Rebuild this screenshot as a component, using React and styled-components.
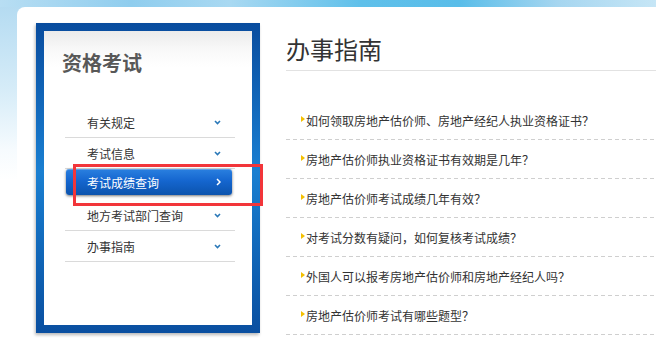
import React from 'react';
import styled, { createGlobalStyle } from 'styled-components';

const GlobalStyle = createGlobalStyle`
  html, body {
    margin: 0;
    padding: 0;
    background: #fff;
  }
  body {
    font-family: 'Noto Sans CJK SC', 'Noto Sans', sans-serif;
    overflow: hidden;
  }
`;

const Page = styled.div`
  position: relative;
  width: 656px;
  height: 342px;
  overflow: hidden;
  background:
    linear-gradient(90deg, #b8def3 0%, #8fcdee 20%, #a9d9f2 35%, #5fc0ea 55%, #59bde9 70%, #a6d6f0 85%, #c6e6f6 100%) top left / 100% 7px no-repeat,
    linear-gradient(180deg, #b2daf1 0px, #d6ecf8 90px, #f6fbfe 150px, #fff 180px);
  display: flex;
`;

const Panel = styled.div`
  flex: 1;
  margin: 7px 0 0 17px;
  background: #fff;
  border-top-left-radius: 8px;
  display: flex;
  align-items: flex-start;
  padding: 16px 0 0 19px;
`;

const SideBox = styled.aside`
  width: 224px;
  height: 310px;
  box-sizing: border-box;
  padding: 8px;
  background: linear-gradient(180deg, #094c9e 0%, #1571c4 35%, #1a7fd1 48%, #136fc1 65%, #0a4fa0 100%);
  box-shadow: -1px 2px 3px rgba(0, 0, 0, 0.28);
`;

const SideInner = styled.div`
  height: 100%;
  background: linear-gradient(180deg, #ebebeb 0px, #f8f8f8 18px, #fff 36px);
  padding: 22px 0 0 18px;
  box-sizing: border-box;
`;

const SideTitle = styled.h2`
  margin: 0;
  font-size: 20px;
  line-height: 20px;
  font-weight: 700;
  color: #585858;
  letter-spacing: 0;
`;

const Menu = styled.ul`
  list-style: none;
  margin: 34px 0 0 3px;
  padding: 0;
  width: 170px;
`;

const MenuItem = styled.li`
  height: 30px;
  border-bottom: 1px solid #dadada;
  display: flex;
  align-items: center;
  justify-content: space-between;
  padding: 0 14px 0 22px;
  font-size: 12px;
  color: #333;
`;

const ActiveItem = styled.li`
  height: 31px;
  box-sizing: border-box;
  padding: 0 3px 5px 1px;
`;

const ActiveButton = styled.div`
  height: 26px;
  border-radius: 3px;
  background: linear-gradient(180deg, #2a80e0 0%, #1566cf 45%, #0b53ad 100%);
  box-shadow: 0 1px 3px rgba(0, 0, 0, 0.55), inset 0 1px 0 rgba(255, 255, 255, 0.25);
  display: flex;
  align-items: center;
  justify-content: space-between;
  padding: 0 11px 0 21px;
  font-size: 12px;
  color: #fff;
`;

const Content = styled.main`
  flex: 1;
  margin-left: 26px;
`;

const Heading = styled.h1`
  margin: 10px 0 0;
  font-size: 24px;
  line-height: 32px;
  font-weight: 400;
  color: #333;
  padding-bottom: 5px;
  border-bottom: 1px solid #e2e2e2;
`;

const List = styled.ul`
  list-style: none;
  margin: 30px 0 0;
  padding: 0;
`;

const ListItem = styled.li`
  height: 39px;
  box-sizing: border-box;
  padding: 0 0 1px 15px;
  display: flex;
  align-items: center;
  font-size: 12px;
  color: #333;
  white-space: nowrap;
  background: linear-gradient(90deg, #cfcfcf 4px, transparent 4px) bottom left / 7px 1px repeat-x;

  &::before {
    content: '';
    width: 0;
    height: 0;
    border-left: 4px solid #f4c000;
    border-top: 3.5px solid transparent;
    border-bottom: 3.5px solid transparent;
    margin: -3px 1px 0 0;
  }
`;

const Annotation = styled.div`
  position: absolute;
  left: 73px;
  top: 164px;
  width: 190px;
  height: 42px;
  box-sizing: border-box;
  border: 3px solid #f2353a;
  pointer-events: none;
`;

const Down = () => (
  <svg width="7" height="5" viewBox="0 0 7 5">
    <polyline points="1,1 3.5,3.5 6,1" fill="none" stroke="#2a78b8" strokeWidth="1.6" />
  </svg>
);

const Right = () => (
  <svg width="5" height="8" viewBox="0 0 5 8">
    <polyline points="1,1 4,4 1,7" fill="none" stroke="#fff" strokeWidth="1.5" />
  </svg>
);

const menu = ['有关规定', '考试信息', '考试成绩查询', '地方考试部门查询', '办事指南'];

const questions = [
  '如何领取房地产估价师、房地产经纪人执业资格证书？',
  '房地产估价师执业资格证书有效期是几年？',
  '房地产估价师考试成绩几年有效？',
  '对考试分数有疑问，如何复核考试成绩？',
  '外国人可以报考房地产估价师和房地产经纪人吗？',
  '房地产估价师考试有哪些题型？',
];

export default function App() {
  return (
    <Page>
      <GlobalStyle />
      <Panel>
        <SideBox>
          <SideInner>
            <SideTitle>资格考试</SideTitle>
            <Menu>
              {menu.map((m) =>
                m === '考试成绩查询' ? (
                  <ActiveItem key={m}>
                    <ActiveButton>
                      {m}
                      <Right />
                    </ActiveButton>
                  </ActiveItem>
                ) : (
                  <MenuItem key={m}>
                    {m}
                    <Down />
                  </MenuItem>
                )
              )}
            </Menu>
          </SideInner>
        </SideBox>
        <Content>
          <Heading>办事指南</Heading>
          <List>
            {questions.map((q) => (
              <ListItem key={q}>{q}</ListItem>
            ))}
          </List>
        </Content>
      </Panel>
      <Annotation />
    </Page>
  );
}
